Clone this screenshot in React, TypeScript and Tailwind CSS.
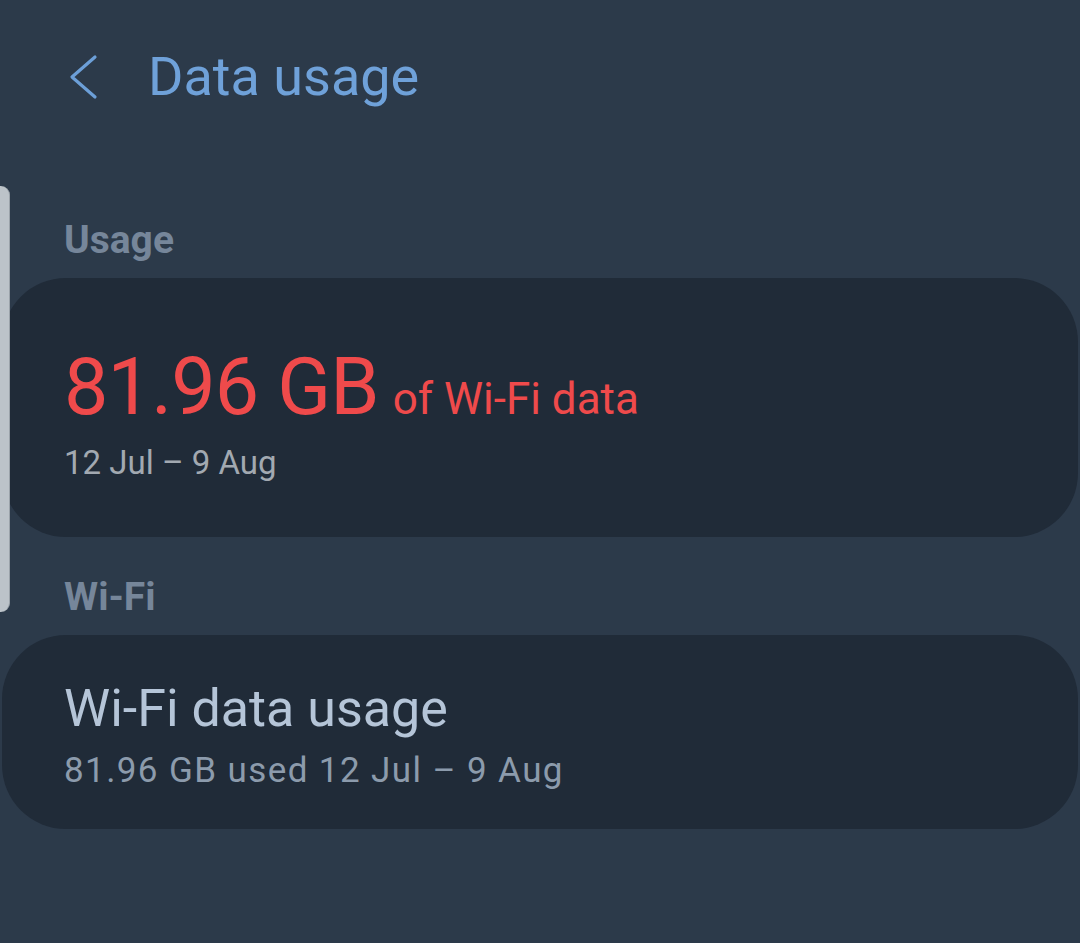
import React from 'react';

const font = { fontFamily: 'Roboto, "Noto Sans", sans-serif' };

export default function App() {
  return (
    <div
      className="relative w-[1080px] h-[943px] overflow-hidden bg-[#2c3a4a] font-['Roboto',sans-serif]"
      style={font}
    >
      {/* scroll handle peeking from the left edge */}
      <div className="absolute left-0 top-[186px] w-[10px] h-[426px] rounded-r-[9px] bg-[#bcc3c9] border-r border-[#9aa2a9]" />

      <header className="flex h-[154px] items-center pl-[68px]">
        <svg width="32" height="46" viewBox="0 0 32 46" fill="none" className="mr-[48px]">
          <path d="M27 3 L4 23 L27 43" stroke="#6c9fd8" strokeWidth="3.2" strokeLinecap="round" strokeLinejoin="round" />
        </svg>
        <h1 className="text-[54px] leading-none text-[#6fa1d9]">Data usage</h1>
      </header>

      <div className="mt-[67px] px-[64px] text-[39px] leading-none font-bold text-[#76869a]">Usage</div>

      <section className="mt-[18px] mx-[2px] rounded-[64px] bg-[#202b38] pl-[62px] pt-[70px] pb-[58px]">
        <div className="flex items-baseline gap-[14px] text-[#ef4a4b] leading-none">
          <span className="text-[79px] tracking-[-0.01em]">81.96 GB</span>
          <span className="text-[44px]">of Wi-Fi data</span>
        </div>
        <div className="mt-[19px] text-[33px] leading-none text-[#a2a9b1]">12 Jul – 9 Aug</div>
      </section>

      <div className="mt-[41px] px-[64px] text-[39px] leading-none font-bold text-[#76869a]">Wi-Fi</div>

      <section className="mt-[18px] mx-[2px] rounded-[64px] bg-[#202b38] pl-[62px] pt-[48px] pb-[41px]">
        <div className="text-[52px] leading-none text-[#b5c5d8]">Wi-Fi data usage</div>
        <div className="mt-[18px] text-[35px] leading-none tracking-[0.04em] text-[#8c9bac]">81.96 GB used 12 Jul – 9 Aug</div>
      </section>
    </div>
  );
}
